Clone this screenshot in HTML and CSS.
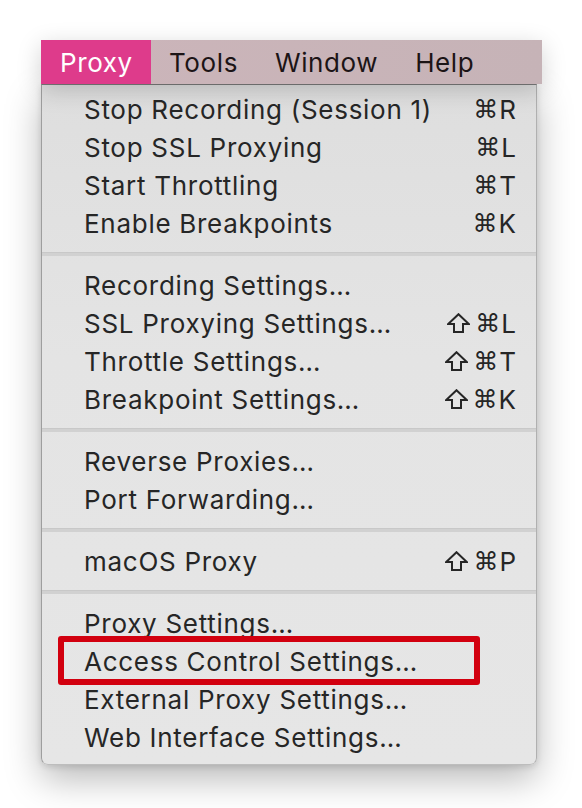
FILE: index.html
```html
<!DOCTYPE html>
<html>
<head>
<meta charset="utf-8">
<link rel="stylesheet" href="styles.css">
</head>
<body>
<div class="stage">
  <div class="menubar">
    <div class="mb-item active">Proxy</div>
    <div class="mb-item">Tools</div>
    <div class="mb-item">Window</div>
    <div class="mb-item">Help</div>
  </div>
  <div class="dropdown">
    <div class="row"><span>Stop Recording (Session 1)</span><span class="key"><span class="cmd">⌘</span>R</span></div>
    <div class="row"><span>Stop SSL Proxying</span><span class="key"><span class="cmd">⌘</span>L</span></div>
    <div class="row"><span>Start Throttling</span><span class="key"><span class="cmd">⌘</span>T</span></div>
    <div class="row"><span>Enable Breakpoints</span><span class="key"><span class="cmd">⌘</span>K</span></div>
    <div class="sep"></div>
    <div class="row"><span>Recording Settings…</span></div>
    <div class="row"><span>SSL Proxying Settings…</span><span class="key"><svg class="shift" viewBox="0 0 23 20"><polygon points="11.5,1.2 21.8,11 16,11 16,18.9 7,18.9 7,11 1.2,11" fill="none" stroke="#262626" stroke-width="2" stroke-linejoin="miter"/></svg><span class="cmd">⌘</span>L</span></div>
    <div class="row"><span>Throttle Settings…</span><span class="key"><svg class="shift" viewBox="0 0 23 20"><polygon points="11.5,1.2 21.8,11 16,11 16,18.9 7,18.9 7,11 1.2,11" fill="none" stroke="#262626" stroke-width="2" stroke-linejoin="miter"/></svg><span class="cmd">⌘</span>T</span></div>
    <div class="row"><span>Breakpoint Settings…</span><span class="key"><svg class="shift" viewBox="0 0 23 20"><polygon points="11.5,1.2 21.8,11 16,11 16,18.9 7,18.9 7,11 1.2,11" fill="none" stroke="#262626" stroke-width="2" stroke-linejoin="miter"/></svg><span class="cmd">⌘</span>K</span></div>
    <div class="sep"></div>
    <div class="row"><span>Reverse Proxies…</span></div>
    <div class="row"><span>Port Forwarding…</span></div>
    <div class="sep"></div>
    <div class="row"><span>macOS Proxy</span><span class="key"><svg class="shift" viewBox="0 0 23 20"><polygon points="11.5,1.2 21.8,11 16,11 16,18.9 7,18.9 7,11 1.2,11" fill="none" stroke="#262626" stroke-width="2" stroke-linejoin="miter"/></svg><span class="cmd">⌘</span>P</span></div>
    <div class="sep"></div>
    <div class="row"><span>Proxy Settings…</span></div>
    <div class="row"><span>Access Control Settings…</span><div class="redbox"></div></div>
    <div class="row"><span>External Proxy Settings…</span></div>
    <div class="row"><span>Web Interface Settings…</span></div>
  </div>
</div>
</body>
</html>
```
FILE: styles.css
```css
html, body {
  margin: 0;
  padding: 0;
  background: #ffffff;
}
body {
  width: 582px;
  height: 808px;
  overflow: hidden;
  font-family: "Inter", "Noto Sans", "DejaVu Sans", sans-serif;
  color: #262626;
}
.stage {
  padding: 40px 0 0 41px;
}
.menubar {
  width: 501px;
  height: 44px;
  background: linear-gradient(90deg, #ccb5ba, #c6b3b7);
  display: flex;
  align-items: center;
  box-shadow: 0 6px 24px rgba(0,0,0,0.18);
  position: relative;
  z-index: 1;
}
.mb-item {
  height: 44px;
  display: flex;
  align-items: center;
  font-size: 26px;
  letter-spacing: 0.6px;
  color: #1c1416;
}
.mb-item:nth-child(2) { padding-left: 18px; }
.mb-item:nth-child(3) { padding-left: 37px; }
.mb-item:nth-child(4) { padding-left: 37px; }
.mb-item.active {
  background: #de3b8b;
  color: #ffffff;
  width: 110px;
  box-sizing: border-box;
  padding-left: 19px;
}
.dropdown {
  width: 496px;
  box-sizing: border-box;
  background: linear-gradient(180deg, #dedede, #e4e4e4 40%, #e6e6e6);
  border-left: 1px solid #9e9e9e;
  border-right: 1px solid #b0b0b0;
  border-bottom: 1px solid #bdbdbd;
  border-top: 1px solid #7a7a7a;
  border-radius: 0 0 7px 7px;
  padding: 5px 0 8px 0;
  box-shadow: 0 14px 36px rgba(0,0,0,0.28), 0 2px 6px rgba(0,0,0,0.12);
  position: relative;
}
.row {
  height: 38px;
  display: flex;
  align-items: center;
  justify-content: space-between;
  padding: 0 20px 0 42px;
  font-size: 26px;
  letter-spacing: 0.72px;
  position: relative;
}
.key {
  display: flex;
  align-items: center;
  font-size: 26px;
  letter-spacing: 0;
}
.cmd {
  font-family: "DejaVu Sans", sans-serif;
  font-size: 25px;
  margin-right: 1px;
}
.shift {
  width: 23px;
  height: 20px;
  margin-right: 5px;
}
.sep {
  height: 24px;
  position: relative;
}
.sep::after {
  content: "";
  position: absolute;
  left: 0;
  right: 0;
  top: 10px;
  height: 3px;
  background: #d1d1d1;
  border-top: 1px solid #c8c8c8;
}
.redbox {
  position: absolute;
  left: 16px;
  top: -6px;
  width: 422px;
  height: 49px;
  box-sizing: border-box;
  border: 6px solid #d2000f;
  border-radius: 3px;
}
```
